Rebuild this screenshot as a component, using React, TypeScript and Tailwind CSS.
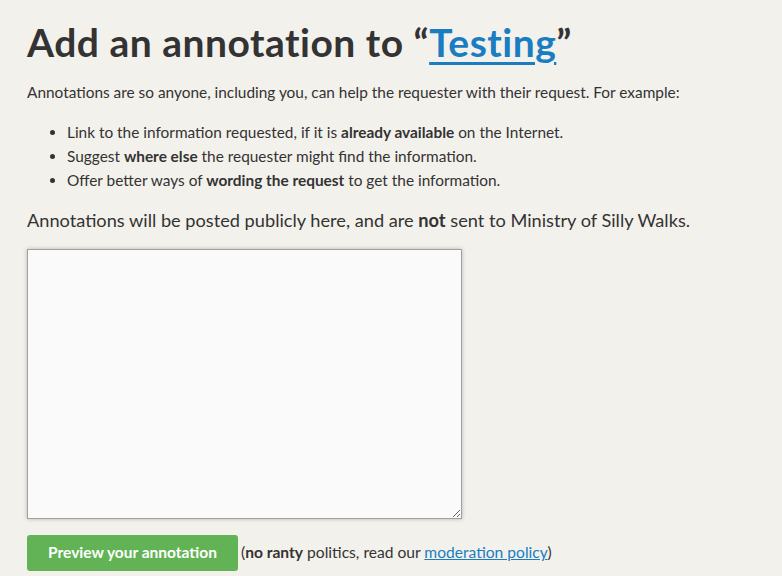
export default function App() {
  return (
    <div className="min-h-screen w-full bg-[#f3f1ec] text-[#333] px-[27px] pt-[19px]" style={{ fontFamily: 'Lato, "Open Sans", sans-serif' }}>
      <h1 className="text-[39px] leading-[46px] font-bold tracking-[0.5px] text-[#333]">
        Add an annotation to “<a href="#" className="text-[#1a7dc2] underline underline-offset-[5px] decoration-[3px]">Testing</a>”
      </h1>

      <p className="mt-[15px] text-[15.4px] leading-[24px]">
        Annotations are so anyone, including you, can help the requester with their request. For example:
      </p>

      <ul className="mt-[16px] pl-[40px] list-disc text-[15.4px] leading-[24px]">
        <li>Link to the information requested, if it is <strong>already available</strong> on the Internet.</li>
        <li>Suggest <strong>where else</strong> the requester might find the information.</li>
        <li>Offer better ways of <strong>wording the request</strong> to get the information.</li>
      </ul>

      <p className="mt-[13px] text-[18.2px] leading-[30px]">
        Annotations will be posted publicly here, and are <strong>not</strong> sent to Ministry of Silly Walks.
      </p>

      <textarea
        className="mt-[14px] block w-[435px] h-[270px] bg-[#fafafa] border border-[#a0a0a0] shadow-[0_0_4px_rgba(0,0,0,0.25)] outline-none resize-y p-2"
        autoFocus
      />

      <div className="mt-[16px] flex items-center gap-[3px] text-[15.6px]">
        <button className="w-[211px] h-[36px] rounded-[3px] bg-[#62b356] text-white font-bold text-[15.5px]">
          Preview your annotation
        </button>
        <span>
          (<strong>no ranty</strong> politics, read our{' '}
          <a href="#" className="text-[#1a7dc2] underline">moderation policy</a>)
        </span>
      </div>
    </div>
  )
}
